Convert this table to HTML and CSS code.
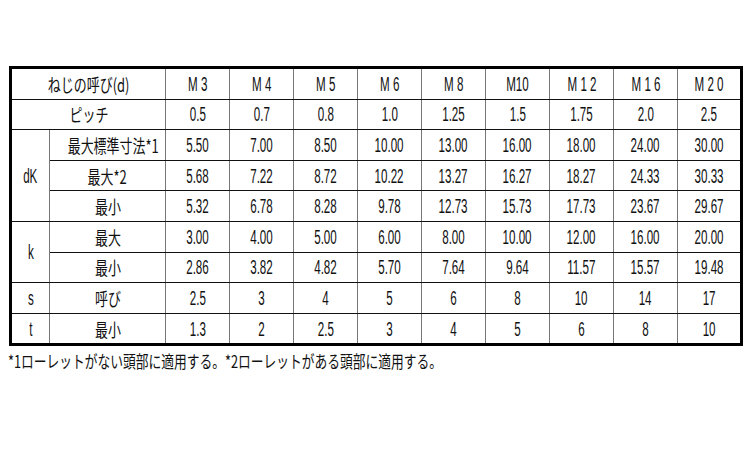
FILE: index.html
```html
<!DOCTYPE html>
<html lang="ja">
<head>
<meta charset="utf-8">
<link rel="stylesheet" href="styles.css">
</head>
<body>
<div class="page">
<table class="spec">
<colgroup>
<col class="c-a"><col class="c-b">
<col class="c-d"><col class="c-d"><col class="c-d"><col class="c-d"><col class="c-d"><col class="c-d"><col class="c-d"><col class="c-d"><col class="c-d">
</colgroup>
<tr><td colspan="2"><span class="j">ねじの呼び(d)</span></td><td><span class="n">M 3</span></td><td><span class="n">M 4</span></td><td><span class="n">M 5</span></td><td><span class="n">M 6</span></td><td><span class="n">M 8</span></td><td><span class="n">M10</span></td><td><span class="n">M 1 2</span></td><td><span class="n">M 1 6</span></td><td><span class="n">M 2 0</span></td></tr>
<tr><td colspan="2"><span class="j">ピッチ</span></td><td><span class="n">0.5</span></td><td><span class="n">0.7</span></td><td><span class="n">0.8</span></td><td><span class="n">1.0</span></td><td><span class="n">1.25</span></td><td><span class="n">1.5</span></td><td><span class="n">1.75</span></td><td><span class="n">2.0</span></td><td><span class="n">2.5</span></td></tr>
<tr><td rowspan="3"><span class="n">dK</span></td><td><span class="j">最大標準寸法*1</span></td><td><span class="n">5.50</span></td><td><span class="n">7.00</span></td><td><span class="n">8.50</span></td><td><span class="n">10.00</span></td><td><span class="n">13.00</span></td><td><span class="n">16.00</span></td><td><span class="n">18.00</span></td><td><span class="n">24.00</span></td><td><span class="n">30.00</span></td></tr>
<tr><td><span class="j">最大*2</span></td><td><span class="n">5.68</span></td><td><span class="n">7.22</span></td><td><span class="n">8.72</span></td><td><span class="n">10.22</span></td><td><span class="n">13.27</span></td><td><span class="n">16.27</span></td><td><span class="n">18.27</span></td><td><span class="n">24.33</span></td><td><span class="n">30.33</span></td></tr>
<tr><td><span class="j">最小</span></td><td><span class="n">5.32</span></td><td><span class="n">6.78</span></td><td><span class="n">8.28</span></td><td><span class="n">9.78</span></td><td><span class="n">12.73</span></td><td><span class="n">15.73</span></td><td><span class="n">17.73</span></td><td><span class="n">23.67</span></td><td><span class="n">29.67</span></td></tr>
<tr><td rowspan="2"><span class="n">k</span></td><td><span class="j">最大</span></td><td><span class="n">3.00</span></td><td><span class="n">4.00</span></td><td><span class="n">5.00</span></td><td><span class="n">6.00</span></td><td><span class="n">8.00</span></td><td><span class="n">10.00</span></td><td><span class="n">12.00</span></td><td><span class="n">16.00</span></td><td><span class="n">20.00</span></td></tr>
<tr><td><span class="j">最小</span></td><td><span class="n">2.86</span></td><td><span class="n">3.82</span></td><td><span class="n">4.82</span></td><td><span class="n">5.70</span></td><td><span class="n">7.64</span></td><td><span class="n">9.64</span></td><td><span class="n">11.57</span></td><td><span class="n">15.57</span></td><td><span class="n">19.48</span></td></tr>
<tr><td><span class="n">s</span></td><td><span class="j">呼び</span></td><td><span class="n">2.5</span></td><td><span class="n">3</span></td><td><span class="n">4</span></td><td><span class="n">5</span></td><td><span class="n">6</span></td><td><span class="n">8</span></td><td><span class="n">10</span></td><td><span class="n">14</span></td><td><span class="n">17</span></td></tr>
<tr><td><span class="n">t</span></td><td><span class="j">最小</span></td><td><span class="n">1.3</span></td><td><span class="n">2</span></td><td><span class="n">2.5</span></td><td><span class="n">3</span></td><td><span class="n">4</span></td><td><span class="n">5</span></td><td><span class="n">6</span></td><td><span class="n">8</span></td><td><span class="n">10</span></td></tr>
</table>
<p class="note"><span class="note-text">*1ローレットがない頭部に適用する。*2ローレットがある頭部に適用する。</span></p>
</div>
</body>
</html>
```
FILE: styles.css
```css
html, body {
  margin: 0;
  padding: 0;
  background: #ffffff;
}
.page {
  padding: 66px 0 0 9px;
  color: #111;
}
.spec {
  border-collapse: collapse;
  table-layout: fixed;
  width: 731px;
  border: 3px solid #000;
}
.c-a { width: 39px; }
.c-b { width: 116px; }
.c-d { width: 64px; }
.spec td {
  height: 29.6px;
  padding: 0;
  text-align: center;
  vertical-align: middle;
  border-top: 1px solid #111;
  border-bottom: 1px solid #111;
  border-left: 1px solid #777;
  border-right: 1px solid #777;
  white-space: nowrap;
  overflow: hidden;
  line-height: 1;
  font-size: 0;
}
.n {
  display: inline-block;
  vertical-align: middle;
  font-family: "Liberation Sans", Arial, sans-serif;
  font-size: 20px;
  line-height: 22px;
  transform: scaleX(0.58);
  color: #111;
}
.j {
  display: inline-block;
  vertical-align: middle;
  font-family: "Noto Sans CJK JP", "Noto Sans", sans-serif;
  font-size: 18px;
  line-height: 22px;
  transform: scaleX(0.72);
  white-space: nowrap;
  color: #111;
}
.note {
  margin: 3px 0 0 -1px;
  height: 24px;
  white-space: nowrap;
}
.note-text {
  display: inline-block;
  font-family: "Noto Sans CJK JP", "Noto Sans", sans-serif;
  font-size: 17px;
  line-height: 24px;
  color: #111;
  transform: scaleX(0.75);
  transform-origin: left center;
}
```
